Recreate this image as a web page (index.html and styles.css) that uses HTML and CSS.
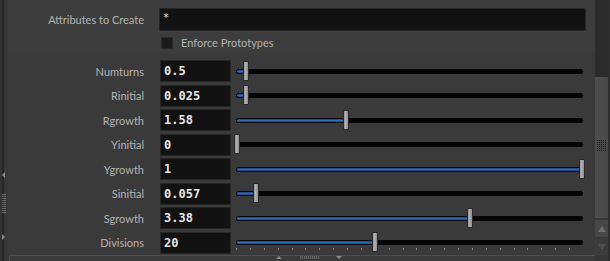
FILE: index.html
```html
<!DOCTYPE html>
<html lang="en">
<head>
  <meta charset="UTF-8">
  <title>Parameters</title>
  <link rel="stylesheet" href="styles.css">
</head>
<body>
  <div class="edge">
    <div class="edge-arrow left"></div>
    <div class="edge-grip"></div>
    <div class="edge-arrow right"></div>
  </div>

  <div class="main">
    <div class="section top">
      <div class="row">
        <div class="label">Attributes to Create</div>
        <div class="field wide">*</div>
      </div>
      <div class="row check-row">
        <div class="label"></div>
        <div class="checkbox"></div>
        <div class="check-label">Enforce Prototypes</div>
      </div>
    </div>

    <div class="section params">
      <div class="row param">
        <div class="label">Numturns</div>
        <div class="field num">0.5</div>
        <div class="slider">
          <div class="fill" style="width: 2.9%"></div>
          <div class="handle" style="left: 2.9%"></div>
        </div>
      </div>
      <div class="row param">
        <div class="label">Rinitial</div>
        <div class="field num">0.025</div>
        <div class="slider">
          <div class="fill" style="width: 2.9%"></div>
          <div class="handle" style="left: 2.9%"></div>
        </div>
      </div>
      <div class="row param">
        <div class="label">Rgrowth</div>
        <div class="field num">1.58</div>
        <div class="slider">
          <div class="fill" style="width: 31.7%"></div>
          <div class="handle" style="left: 31.7%"></div>
        </div>
      </div>
      <div class="row param">
        <div class="label">Yinitial</div>
        <div class="field num">0</div>
        <div class="slider">
          <div class="fill" style="width: 0%"></div>
          <div class="handle" style="left: 0.3%"></div>
        </div>
      </div>
      <div class="row param">
        <div class="label">Ygrowth</div>
        <div class="field num">1</div>
        <div class="slider">
          <div class="fill" style="width: 99.7%"></div>
          <div class="handle" style="left: 99.7%"></div>
        </div>
      </div>
      <div class="row param">
        <div class="label">Sinitial</div>
        <div class="field num">0.057</div>
        <div class="slider">
          <div class="fill" style="width: 5.8%"></div>
          <div class="handle" style="left: 5.8%"></div>
        </div>
      </div>
      <div class="row param">
        <div class="label">Sgrowth</div>
        <div class="field num">3.38</div>
        <div class="slider">
          <div class="fill" style="width: 67.4%"></div>
          <div class="handle" style="left: 67.4%"></div>
        </div>
      </div>
      <div class="row param">
        <div class="label">Divisions</div>
        <div class="field num">20</div>
        <div class="slider ticked">
          <div class="fill" style="width: 40.1%"></div>
          <div class="ticks"></div>
          <div class="handle" style="left: 40.1%"></div>
        </div>
      </div>
    </div>

    <div class="splitter">
      <div class="split-arrow up"></div>
      <div class="split-grip"></div>
      <div class="split-arrow down"></div>
    </div>
  </div>

  <div class="scrollbar">
    <div class="scroll-track"></div>
    <div class="scroll-thumb"><div class="scroll-grip"></div></div>
    <div class="scroll-btn up"></div>
    <div class="scroll-btn down"></div>
  </div>
</body>
</html>
```

FILE: styles.css
```css
body {
  margin: 0;
  width: 610px;
  height: 261px;
  overflow: hidden;
  display: flex;
  background-color: #3a3a3a;
  font-family: 'Lato', 'Open Sans', sans-serif;
  font-size: 11px;
  color: #b2b2b2;
}

/* left pane edge */
.edge {
  width: 8px;
  flex: none;
  background: linear-gradient(to right, #333 0 2px, #262626 2px 4px, #383838 4px);
  display: flex;
  flex-direction: column;
  align-items: center;
  padding-top: 172px;
  box-sizing: border-box;
}
.edge-arrow {
  width: 0;
  height: 0;
  border-top: 3px solid transparent;
  border-bottom: 3px solid transparent;
  margin-left: -1px;
}
.edge-arrow.left {
  border-right: 3px solid #8a8a8a;
}
.edge-arrow.right {
  border-left: 3px solid #8a8a8a;
}
.edge-grip {
  width: 4px;
  height: 20px;
  margin: 16px 0 20px -1px;
  background: repeating-linear-gradient(to bottom, #6a6a6a 0 1px, transparent 1px 2px);
}

.main {
  flex: 1;
  display: flex;
  flex-direction: column;
}

.section.top {
  height: 56px;
  padding-top: 8px;
  box-sizing: border-box;
  background: linear-gradient(to bottom, #3d3d3d 0, #3d3d3d 48px, #3a3a3a 56px);
}
.section.params {
  padding-top: 4px;
  display: flex;
  flex-direction: column;
  gap: 2.57px;
}

.row {
  display: flex;
  align-items: center;
}
.label {
  width: 136px;
  flex: none;
  text-align: right;
  margin-right: 15px;
}

.field {
  height: 22px;
  box-sizing: border-box;
  background-color: #121212;
  border: 1px solid #262626;
  color: #e6e6e6;
  display: flex;
  align-items: center;
  padding-left: 3px;
}
.field.wide {
  height: 23px;
  width: 427px;
  font-family: 'DejaVu Sans Mono', monospace;
  font-size: 10px;
  align-items: flex-start;
  padding-top: 3px;
}
.field.num {
  width: 71px;
  margin-left: 1px;
  font-family: 'DejaVu Sans Mono', monospace;
  font-weight: bold;
  font-size: 12px;
}

.check-row {
  margin-top: 5px;
}
.checkbox {
  width: 12px;
  height: 12px;
  margin-left: 2px;
  box-sizing: border-box;
  background-color: #1b1b1b;
  border: 1px solid #2b2b2b;
}
.check-label {
  margin-left: 8px;
}

/* sliders */
.slider {
  flex: 1;
  margin: 0 12px 0 5px;
  height: 5px;
  background-color: #050505;
  border-radius: 3px;
  position: relative;
}
.fill {
  position: absolute;
  left: 1px;
  top: 1px;
  height: 3px;
  border-radius: 2px;
  background: linear-gradient(to bottom, #163f78, #2a6ec4 50%, #163f78);
}
.handle {
  position: absolute;
  top: -8px;
  width: 6px;
  height: 20px;
  margin-left: -3px;
  box-sizing: border-box;
  border: 1px solid #2a2a2a;
  border-radius: 1px;
  background: linear-gradient(to right, #8c8c8c, #b4b4b4 40%, #8a8a8a);
}
.ticks {
  position: absolute;
  left: 0;
  right: 0;
  top: 8px;
  height: 2px;
  background: repeating-linear-gradient(to right, #8a8a8a 0 1px, transparent 1px 13.88px);
}

/* bottom splitter */
.splitter {
  margin-top: auto;
  height: 5px;
  border-top: 1px solid #4e4e4e;
  border-left: 1px solid #4e4e4e;
  margin-left: 1px;
  display: flex;
  align-items: flex-start;
  padding-left: 266px;
}
.split-arrow {
  width: 0;
  height: 0;
  border-left: 3px solid transparent;
  border-right: 3px solid transparent;
}
.split-arrow.up {
  border-bottom: 3px solid #8a8a8a;
}
.split-arrow.down {
  border-top: 3px solid #8a8a8a;
}
.split-grip {
  width: 20px;
  height: 3px;
  margin: 0 16px 0 18px;
  background: repeating-linear-gradient(to right, #6a6a6a 0 1px, transparent 1px 2px);
}

/* right scrollbar */
.scrollbar {
  width: 15px;
  flex: none;
  box-sizing: border-box;
  border-right: 2px solid #2e2e2e;
  background-color: #363636;
  display: flex;
  flex-direction: column;
}
.scroll-track {
  height: 77px;
  background-color: #2b2b2b;
}
.scroll-thumb {
  height: 141px;
  background: linear-gradient(to right, #4e4e4e, #484848);
  display: flex;
  justify-content: center;
  padding-top: 63px;
  box-sizing: border-box;
}
.scroll-grip {
  width: 9px;
  height: 12px;
  background:
    repeating-linear-gradient(to right, transparent 0 1px, #484848 1px 2px),
    repeating-linear-gradient(to bottom, #1e1e1e 0 1px, transparent 1px 2px);
}
.scroll-btn {
  height: 17px;
  display: flex;
  justify-content: center;
  align-items: center;
}
.scroll-btn.up {
  margin-top: 2px;
  background-color: #474747;
}
.scroll-btn.up::after {
  content: '';
  border-left: 4px solid transparent;
  border-right: 4px solid transparent;
  border-bottom: 6px solid #6e6e6e;
}
.scroll-btn.down {
  margin-top: 1px;
  background-color: #3c3c3c;
}
.scroll-btn.down::after {
  content: '';
  border-left: 4px solid transparent;
  border-right: 4px solid transparent;
  border-top: 6px solid #4e4e4e;
}
```
